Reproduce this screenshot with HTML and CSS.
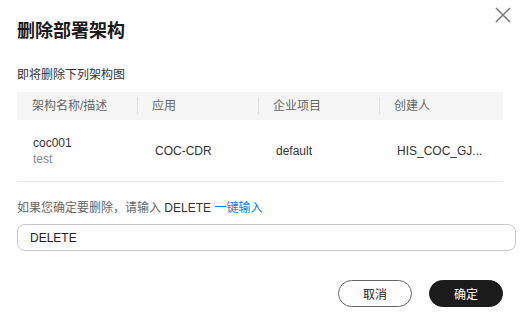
FILE: index.html
```html
<!DOCTYPE html>
<html lang="zh-CN">

<head>
  <meta charset="UTF-8" />
  <meta name="viewport" content="width=device-width, initial-scale=1.0" />
  <title>删除部署架构</title>
  <link rel="stylesheet" href="styles.css">
</head>

<body>
  <div class="dialog">
    <div class="dialog-head">
      <h2 class="dialog-title">删除部署架构</h2>
      <button class="close-btn" aria-label="关闭">
        <svg width="16" height="16" viewBox="0 0 16 16">
          <path d="M1 1 L15 15 M15 1 L1 15" stroke="#7a7a7a" stroke-width="1.5" fill="none" />
        </svg>
      </button>
    </div>

    <p class="sub-text">即将删除下列架构图</p>

    <div class="table">
      <div class="table-head">
        <div class="th">架构名称/描述</div>
        <div class="th">应用</div>
        <div class="th">企业项目</div>
        <div class="th">创建人</div>
      </div>
      <div class="table-row">
        <div class="td">
          <div class="name">coc001</div>
          <div class="desc">test</div>
        </div>
        <div class="td">COC-CDR</div>
        <div class="td">default</div>
        <div class="td ellipsis">HIS_COC_GJ...</div>
      </div>
    </div>

    <p class="confirm-tip">如果您确定要删除，请输入 <span class="keyword">DELETE</span> <a href="#" class="quick-link">一键输入</a></p>

    <input class="confirm-input" type="text" value="DELETE">

    <div class="dialog-foot">
      <button class="btn btn-cancel">取消</button>
      <button class="btn btn-ok">确定</button>
    </div>
  </div>
</body>

</html>
```

FILE: styles.css
```css
body {
  margin: 0;
  background: #fff;
  font-family: "Liberation Sans", "Noto Sans CJK SC", sans-serif;
  color: #333;
}

.dialog {
  display: flex;
  flex-direction: column;
  padding: 7px 11px 0 17px;
}

.dialog-head {
  display: flex;
  justify-content: space-between;
  align-items: flex-start;
}

.dialog-title {
  margin: 12px 0 0;
  font-size: 18px;
  line-height: 24px;
  font-weight: bold;
  color: #1a1a1a;
}

.close-btn {
  background: transparent;
  border: none;
  padding: 0;
  margin-right: 5px;
  width: 16px;
  height: 16px;
  cursor: pointer;
}

.close-btn svg {
  display: block;
}

.sub-text {
  margin: 23px 0 0;
  font-size: 12px;
  line-height: 18px;
  color: #333;
}

.table {
  margin: 8px 13px 0 0;
  font-size: 12px;
}

.table-head,
.table-row {
  display: grid;
  grid-template-columns: 120px 121px 121px 1fr;
}

.table-head {
  height: 28px;
  background: #f5f5f5;
  align-items: center;
}

.th {
  position: relative;
  padding-left: 15px;
  color: #666;
  line-height: 16px;
}

.th + .th::before {
  content: "";
  position: absolute;
  left: 0;
  top: -1px;
  width: 1px;
  height: 17px;
  background: #dfdfdf;
}

.table-row {
  height: 61px;
  border-bottom: 1px solid #ebebeb;
  align-items: center;
}

.td {
  padding-left: 18px;
  line-height: 16px;
  color: #333;
}

.td:first-child {
  padding-left: 16px;
}

.td .desc {
  color: #888;
}

.ellipsis {
  white-space: nowrap;
  overflow: hidden;
}

.confirm-tip {
  margin: 17px 0 0;
  font-size: 12px;
  line-height: 18px;
  color: #666;
}

.keyword {
  color: #333;
}

.quick-link {
  color: #1a7ae6;
  text-decoration: none;
}

.confirm-input {
  margin-top: 7px;
  height: 27px;
  box-sizing: border-box;
  border: 1px solid #c8c8c8;
  border-radius: 8px;
  padding: 0 12px;
  font-family: "Liberation Sans", "Noto Sans CJK SC", sans-serif;
  font-size: 12px;
  color: #222;
  outline: none;
}

.dialog-foot {
  display: flex;
  justify-content: flex-end;
  gap: 17px;
  margin: 29px 13px 0 0;
}

.btn {
  width: 74px;
  height: 27px;
  border-radius: 14px;
  font-family: "Liberation Sans", "Noto Sans CJK SC", sans-serif;
  font-size: 12px;
  cursor: pointer;
}

.btn-cancel {
  background: #fff;
  border: 1px solid #666;
  color: #222;
}

.btn-ok {
  background: #1b1b1b;
  border: 1px solid #1b1b1b;
  color: #fff;
}
```
